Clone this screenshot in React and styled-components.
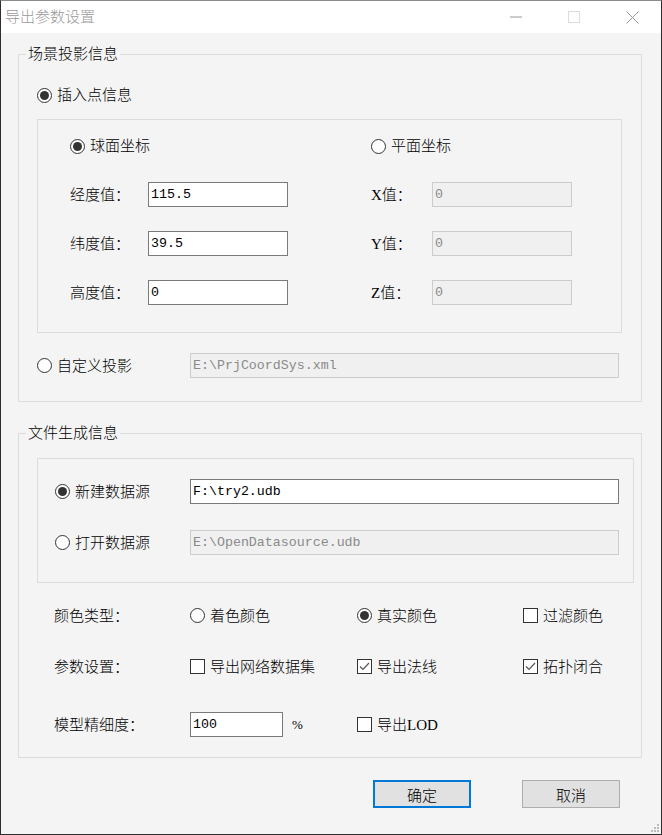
import React from "react"
import styled, { createGlobalStyle } from "styled-components"

const FONT = `"Liberation Serif", "Noto Sans CJK SC", serif`

const GlobalStyle = createGlobalStyle`
  html, body {
    margin: 0;
    padding: 0;
    background: #f4f4f4;
  }
  * {
    box-sizing: border-box;
  }
`

const App = () => {
  return (
    <>
      <GlobalStyle />
      <Window>
        <TitleBar>
          <Title>导出参数设置</Title>
          <Caption>
            <CaptionButton>
              <svg width="12" height="2" viewBox="0 0 12 2">
                <line x1="0" y1="1" x2="12" y2="1" stroke="#999" strokeWidth="1" />
              </svg>
            </CaptionButton>
            <CaptionButton>
              <svg width="12" height="12" viewBox="0 0 12 12">
                <rect x="0.5" y="0.5" width="11" height="11" fill="none" stroke="#dcdcdc" />
              </svg>
            </CaptionButton>
            <CaptionButton>
              <svg width="13" height="13" viewBox="0 0 13 13">
                <path d="M0.5 0.5 L12.5 12.5 M12.5 0.5 L0.5 12.5" stroke="#999" strokeWidth="1" />
              </svg>
            </CaptionButton>
          </Caption>
        </TitleBar>

        <Body>
          <Group>
            <Legend>场景投影信息</Legend>
            <GroupBody $pad="20px 19px 23px 18px">
              <Line>
                <Radio on label="插入点信息" />
              </Line>
              <InnerBox $mt={13} $pad="14px 0 27px 32px">
                <CoordGrid>
                  <Span $col="1 / 4">
                    <Radio on label="球面坐标" />
                  </Span>
                  <Span $col="4 / 6">
                    <Radio label="平面坐标" />
                  </Span>

                  <FieldLabel>经度值：</FieldLabel>
                  <TextBox $w={140} value="115.5" readOnly />
                  <span />
                  <FieldLabel>X值：</FieldLabel>
                  <TextBox $w={140} value="0" disabled />

                  <FieldLabel>纬度值：</FieldLabel>
                  <TextBox $w={140} value="39.5" readOnly />
                  <span />
                  <FieldLabel>Y值：</FieldLabel>
                  <TextBox $w={140} value="0" disabled />

                  <FieldLabel>高度值：</FieldLabel>
                  <TextBox $w={140} value="0" readOnly />
                  <span />
                  <FieldLabel>Z值：</FieldLabel>
                  <TextBox $w={140} value="0" disabled />
                </CoordGrid>
              </InnerBox>
              <Line $mt={20} $h={25}>
                <Cell $w={153}>
                  <Radio label="自定义投影" />
                </Cell>
                <TextBox $w={429} value="E:\PrjCoordSys.xml" disabled />
              </Line>
            </GroupBody>
          </Group>

          <Group $mt={21}>
            <Legend>文件生成信息</Legend>
            <GroupBody $pad="15px 7px 20px 18px">
              <InnerBox $pad="20px 14px 27px 17px">
                <Line $h={25}>
                  <Cell $w={135}>
                    <Radio on label="新建数据源" />
                  </Cell>
                  <TextBox $w={429} value="F:\try2.udb" readOnly />
                </Line>
                <Line $mt={26} $h={25}>
                  <Cell $w={135}>
                    <Radio label="打开数据源" />
                  </Cell>
                  <TextBox $w={429} value="E:\OpenDatasource.udb" disabled />
                </Line>
              </InnerBox>

              <OptionRow $mt={20}>
                <FieldLabel>颜色类型：</FieldLabel>
                <Radio label="着色颜色" />
                <Radio on label="真实颜色" />
                <Check label="过滤颜色" />
              </OptionRow>
              <OptionRow $mt={26}>
                <FieldLabel>参数设置：</FieldLabel>
                <Check label="导出网络数据集" />
                <Check on label="导出法线" />
                <Check on label="拓扑闭合" />
              </OptionRow>
              <OptionRow $mt={33}>
                <FieldLabel>模型精细度：</FieldLabel>
                <Cell>
                  <TextBox $w={93} value="100" readOnly />
                  <Percent>%</Percent>
                </Cell>
                <Check label="导出LOD" />
              </OptionRow>
            </GroupBody>
          </Group>

          <Buttons>
            <Button $default>确定</Button>
            <Button>取消</Button>
          </Buttons>
        </Body>

        <Grip width="10" height="10" viewBox="0 0 10 10">
          <rect x="7" y="1" width="2" height="2" fill="#bcbcbc" />
          <rect x="4" y="4" width="2" height="2" fill="#bcbcbc" />
          <rect x="7" y="4" width="2" height="2" fill="#bcbcbc" />
          <rect x="1" y="7" width="2" height="2" fill="#bcbcbc" />
          <rect x="4" y="7" width="2" height="2" fill="#bcbcbc" />
          <rect x="7" y="7" width="2" height="2" fill="#bcbcbc" />
        </Grip>
      </Window>
    </>
  )
}

const Radio = ({ on, label }) => (
  <Choice>
    <RadioDot $on={on} />
    <span>{label}</span>
  </Choice>
)

const Check = ({ on, label }) => (
  <Choice>
    <CheckBox>
      {on && (
        <svg width="11" height="9" viewBox="0 0 11 9">
          <polyline points="1,4.5 4,7.5 10,1" fill="none" stroke="#555" strokeWidth="1.2" />
        </svg>
      )}
    </CheckBox>
    <span>{label}</span>
  </Choice>
)

export default App

const Window = styled.div`
  position: relative;
  width: 662px;
  height: 835px;
  display: flex;
  flex-direction: column;
  background: #f4f4f4;
  border: 1px solid #2e2e2e;
  border-top-color: #8c8c8c;
  font-family: ${FONT};
  font-size: 15px;
  font-weight: 300;
  color: #000;
`

const TitleBar = styled.div`
  height: 32px;
  display: flex;
  align-items: center;
  justify-content: space-between;
  background: #fff;
  padding-left: 4px;
`

const Title = styled.div`
  color: #9a9a9a;
  font-size: 15px;
  line-height: 20px;
`

const Caption = styled.div`
  display: flex;
  height: 100%;
`

const CaptionButton = styled.div`
  width: 58px;
  height: 100%;
  display: flex;
  align-items: center;
  justify-content: center;
`

const Body = styled.div`
  display: flex;
  flex-direction: column;
  padding: 11px 19px 0 17px;
`

const Group = styled.fieldset`
  margin: ${(p) => p.$mt || 0}px 0 0 0;
  padding: 0;
  min-width: 0;
  border: 1px solid #dcdcdc;
`

const Legend = styled.legend`
  margin-left: 7px;
  padding: 0 2px;
  font-size: 15px;
  line-height: 20px;
`

const GroupBody = styled.div`
  display: flex;
  flex-direction: column;
  padding: ${(p) => p.$pad};
`

const InnerBox = styled.div`
  margin-top: ${(p) => p.$mt || 0}px;
  border: 1px solid #dcdcdc;
  padding: ${(p) => p.$pad};
  display: flex;
  flex-direction: column;
`

const Line = styled.div`
  display: flex;
  align-items: center;
  height: ${(p) => p.$h || 22}px;
  margin-top: ${(p) => p.$mt || 0}px;
`

const Cell = styled.div`
  display: flex;
  align-items: center;
  width: ${(p) => (p.$w ? `${p.$w}px` : "auto")};
  flex: none;
`

const CoordGrid = styled.div`
  display: grid;
  grid-template-columns: 78px 140px 83px 61px 140px;
  grid-template-rows: 24px 25px 25px 25px;
  row-gap: 24px;
  align-items: center;
`

const Span = styled.div`
  grid-column: ${(p) => p.$col};
  display: flex;
  align-items: center;
`

const FieldLabel = styled.span`
  line-height: 20px;
  white-space: nowrap;
`

const TextBox = styled.input`
  width: ${(p) => p.$w}px;
  height: 25px;
  margin: 0;
  padding: 0 2px;
  border: 1px solid #7a7a7a;
  border-radius: 0;
  background: #fff;
  color: #000;
  font-family: "Liberation Mono", monospace;
  font-size: 13.3px;
  outline: none;

  &:disabled {
    border-color: #cccccc;
    background: #f0f0f0;
    color: #8a8a8a;
  }
`

const Choice = styled.label`
  display: flex;
  align-items: center;
  gap: 5px;
  line-height: 20px;
  white-space: nowrap;
`

const RadioDot = styled.span`
  width: 15px;
  height: 15px;
  flex: none;
  border-radius: 50%;
  border: 1px solid #333;
  background: #fff;
  display: flex;
  align-items: center;
  justify-content: center;

  &::after {
    content: "";
    width: 9px;
    height: 9px;
    border-radius: 50%;
    background: ${(p) => (p.$on ? "#333" : "transparent")};
  }
`

const CheckBox = styled.span`
  width: 15px;
  height: 15px;
  flex: none;
  border: 1px solid #333;
  background: #fff;
  display: flex;
  align-items: center;
  justify-content: center;
`

const OptionRow = styled.div`
  display: grid;
  grid-template-columns: 136px 167px 166px auto;
  align-items: center;
  height: 25px;
  margin: ${(p) => p.$mt}px 0 0 17px;
`

const Percent = styled.span`
  margin-left: 9px;
  font-size: 13px;
`

const Buttons = styled.div`
  display: flex;
  justify-content: flex-end;
  gap: 51px;
  margin-top: 22px;
  padding-right: 22px;
`

const Button = styled.button`
  width: 98px;
  height: 28px;
  margin: 0;
  padding: 0;
  border: ${(p) => (p.$default ? "2px solid #0078d7" : "1px solid #adadad")};
  background: #e1e1e1;
  font-family: ${FONT};
  font-size: 15px;
  font-weight: 300;
  color: #000;
`

const Grip = styled.svg`
  position: absolute;
  right: 1px;
  bottom: 1px;
`
